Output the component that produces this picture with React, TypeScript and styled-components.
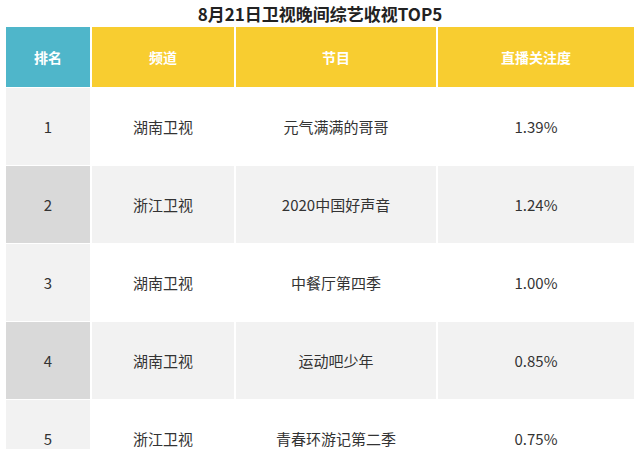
import React from "react";
import styled, { createGlobalStyle } from "styled-components";

const GlobalStyle = createGlobalStyle`
  body {
    margin: 0;
    background: #ffffff;
    font-family: "Noto Sans CJK SC", "Noto Sans", sans-serif;
  }
`;

const Page = styled.div`
  width: 640px;
  height: 449px;
  overflow: hidden;
  padding: 0 6px;
  box-sizing: border-box;
`;

const Title = styled.h1`
  margin: 0;
  height: 27px;
  line-height: 28px;
  text-align: center;
  font-size: 17px;
  font-weight: 700;
  color: #222;
`;

const Table = styled.div`
  display: grid;
  grid-template-columns: 84px 142px 200px 196px;
  grid-auto-rows: 77px;
  grid-template-rows: 60px;
  column-gap: 2px;
  row-gap: 1px;
`;

const HeadCell = styled.div<{ $accent?: boolean }>`
  display: flex;
  align-items: center;
  justify-content: center;
  background: ${(p) => (p.$accent ? "#4fb6ca" : "#f8cd30")};
  color: #ffffff;
  font-size: 14px;
  font-weight: 700;
`;

const Cell = styled.div<{ $tone: "white" | "light" | "dark" }>`
  display: flex;
  align-items: center;
  justify-content: center;
  background: ${(p) =>
    p.$tone === "dark" ? "#d9d9d9" : p.$tone === "light" ? "#f2f2f2" : "#ffffff"};
  color: #333;
  font-size: 15px;
`;

const rows = [
  ["1", "湖南卫视", "元气满满的哥哥", "1.39%"],
  ["2", "浙江卫视", "2020中国好声音", "1.24%"],
  ["3", "湖南卫视", "中餐厅第四季", "1.00%"],
  ["4", "湖南卫视", "运动吧少年", "0.85%"],
  ["5", "浙江卫视", "青春环游记第二季", "0.75%"],
];

export default function App() {
  return (
    <Page>
      <GlobalStyle />
      <Title>8月21日卫视晚间综艺收视TOP5</Title>
      <Table>
        <HeadCell $accent>排名</HeadCell>
        <HeadCell>频道</HeadCell>
        <HeadCell>节目</HeadCell>
        <HeadCell>直播关注度</HeadCell>
        {rows.map((r, i) => {
          const odd = i % 2 === 0;
          return r.map((v, j) => (
            <Cell
              key={`${i}-${j}`}
              $tone={j === 0 ? (odd ? "light" : "dark") : odd ? "white" : "light"}
            >
              {v}
            </Cell>
          ));
        })}
      </Table>
    </Page>
  );
}
